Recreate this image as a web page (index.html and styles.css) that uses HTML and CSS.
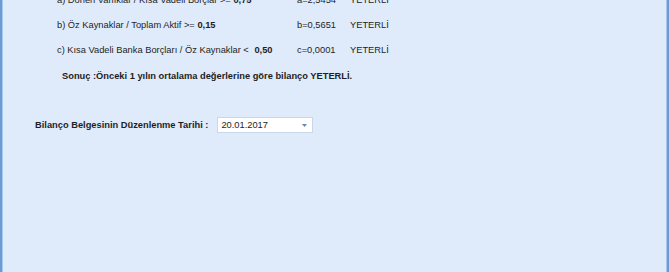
FILE: index.html
```html
<!DOCTYPE html>
<html lang="tr">
<head>
  <meta charset="UTF-8">
  <title>Bilanço Değerlendirme</title>
  <link rel="stylesheet" href="styles.css">
</head>
<body>

<div class="frame">
  <div class="content">
    <div class="kriter">
      <div class="satir">
        <span class="oran">a) Dönen Varlıklar / Kısa Vadeli Borçlar &gt;= <b>0,75</b></span>
        <span class="deger">a=2,5454</span>
        <span class="durum">YETERLİ</span>
      </div>
      <div class="satir">
        <span class="oran">b) Öz Kaynaklar / Toplam Aktif &gt;= <b>0,15</b></span>
        <span class="deger">b=0,5651</span>
        <span class="durum">YETERLİ</span>
      </div>
      <div class="satir">
        <span class="oran">c) Kısa Vadeli Banka Borçları / Öz Kaynaklar &lt; <b class="ara">0,50</b></span>
        <span class="deger">c=0,0001</span>
        <span class="durum">YETERLİ</span>
      </div>
      <p class="sonuc">Sonuç :Önceki 1 yılın ortalama değerlerine göre bilanço YETERLİ.</p>
    </div>

    <div class="tarih">
      <label>Bilanço Belgesinin Düzenlenme Tarihi :</label>
      <div class="combo">
        <span>20.01.2017</span>
        <svg width="5" height="3" viewBox="0 0 5 3"><path d="M0 0h5L2.5 3z" fill="#6b86a8"/></svg>
      </div>
    </div>
  </div>
</div>

</body>
</html>
```

FILE: styles.css
```css
html, body { margin: 0; height: 100%; }
body { font-family: "Liberation Sans", Arial, sans-serif; font-size: 9.3px; color: #1e1e1e; background: #dfebfb; }
.frame { height: 272px; border-left: 2px solid #6b9ad4; border-right: 2px solid #6b9ad4; box-sizing: border-box; overflow: hidden; box-shadow: inset 1px 0 0 #a9c6ec, inset -1px 0 0 #a9c6ec; }
.content { margin-top: -13px; }
.kriter { padding-left: 55px; }
.satir { display: grid; grid-template-columns: 240px 53px auto; height: 25px; align-items: center; white-space: nowrap; }
.satir b { font-weight: bold; }
.satir b.ara { margin-left: 3px; }
.sonuc { margin: 0 0 0 5px; height: 25px; line-height: 29px; font-weight: bold; white-space: nowrap; }
.tarih { display: flex; align-items: center; gap: 9px; margin-top: 30px; padding-left: 33px; }
.tarih label { font-weight: bold; white-space: nowrap; }
.combo { width: 96px; height: 16px; box-sizing: border-box; background: #fff; border: 1px solid #c9d7e9; display: flex; align-items: center; justify-content: space-between; padding: 0 5px 0 3px; }
```
